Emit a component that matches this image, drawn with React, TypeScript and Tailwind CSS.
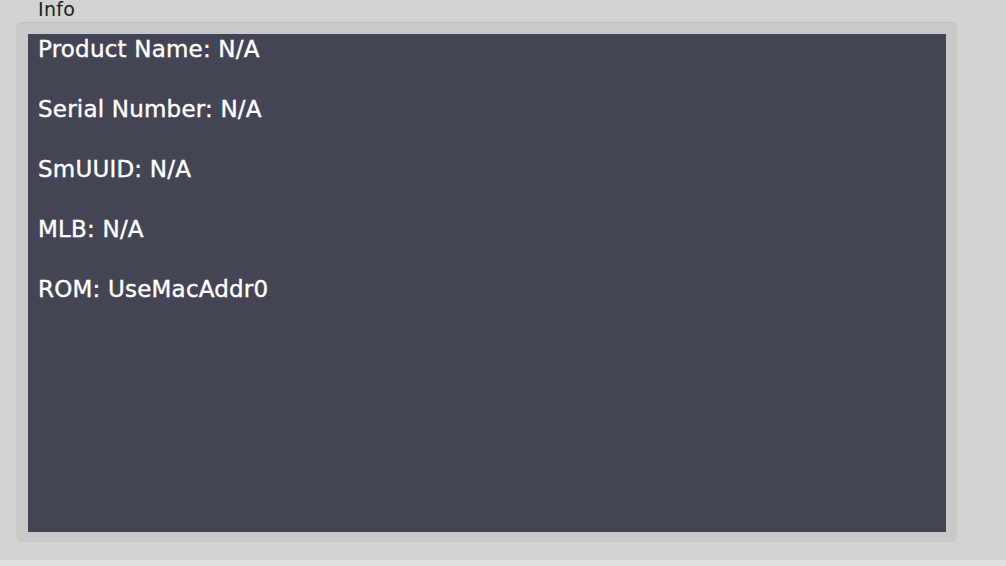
import React from "react";

export default function App() {
  const lines = [
    "Product Name: N/A",
    "Serial Number: N/A",
    "SmUUID: N/A",
    "MLB: N/A",
    "ROM: UseMacAddr0",
  ];
  return (
    <div
      className="w-[1006px] h-[566px] bg-[#d3d3d3] flex flex-col overflow-hidden"
      style={{ fontFamily: '"DejaVu Sans", "Noto Sans", sans-serif' }}
    >
      <div className="h-[18px] pl-[38px] text-[19px] leading-[18px] text-[#202020] shrink-0 tracking-[0.3px]">
        Info
      </div>
      <div className="ml-[16px] mt-[4px] w-[941px] h-[520px] shrink-0 rounded-[6px] bg-[#c9c9c9] border-t border-[#c1c1c1] pt-[11px] pl-[12px]">
        <div className="w-[918px] h-[498px] bg-[#444554] pl-[10px] pt-[2px] flex flex-col gap-[34px]">
          {lines.map((l) => (
            <div
              key={l}
              className="text-white text-[23px] leading-[26px] tracking-[0.2px] [-webkit-text-stroke:0.4px_white]"
            >
              {l}
            </div>
          ))}
        </div>
      </div>
      <div className="flex-1" />
      <div className="h-[6px] bg-[#dedede] shrink-0" />
    </div>
  );
}
